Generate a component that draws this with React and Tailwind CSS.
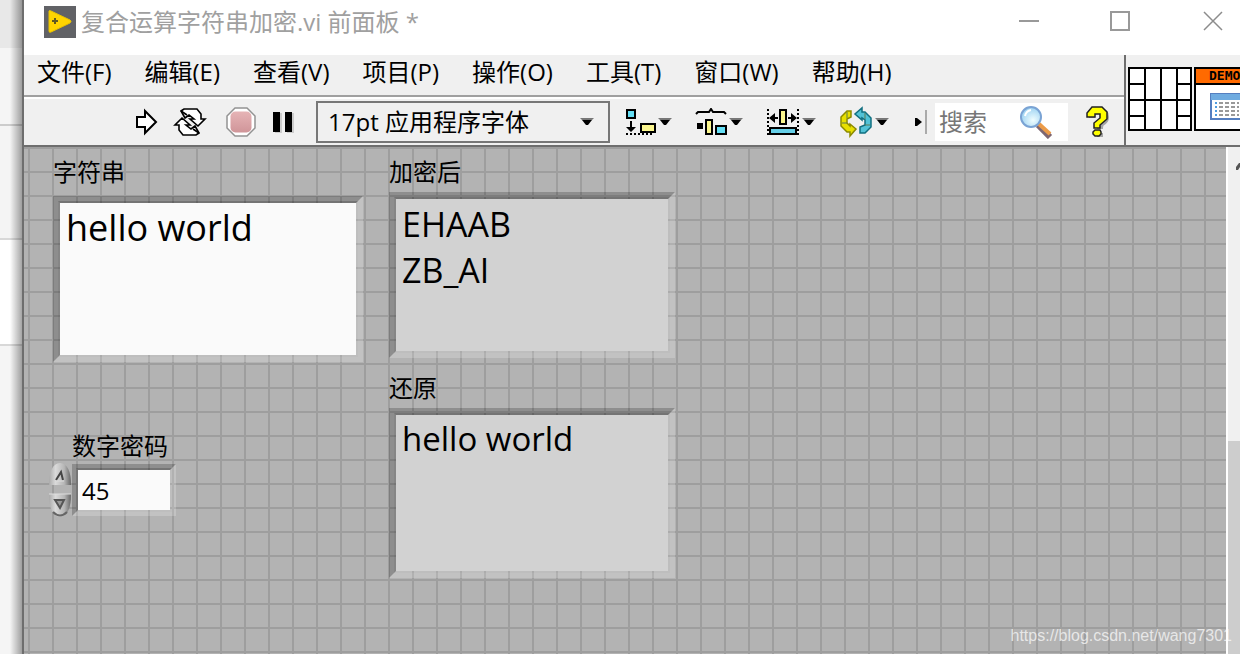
/**
 * App.jsx — LabVIEW front panel window for the string cipher VI
 */
const MENUS = ["文件(F)", "编辑(E)", "查看(V)", "项目(P)", "操作(O)", "工具(T)", "窗口(W)", "帮助(H)"];

const UI_FONT = "font-['Open_Sans','Noto_Sans_CJK_SC',sans-serif]";

// two-step bevel: soft outer ring on the wrapper, darker inner ring on the field
const BEVEL_OUTER = "border-t-black/20 border-l-black/20 border-r-white/20 border-b-white/20";
const BEVEL_INNER = "border-2 border-t-black/35 border-l-black/25 border-r-white/15 border-b-white/15 bg-clip-padding";

function Caret({ className = "" }) {
  return (
    <svg viewBox="0 0 14 8" className={`w-[14px] h-2 flex-shrink-0 ${className}`} aria-hidden="true">
      <path d="M0 0h14L12 2H2z" fill="#777" />
      <path d="M2 2h10L8 7H6z" fill="#000" />
    </svg>
  );
}

function VIIcon() {
  return (
    <svg viewBox="0 0 32 32" className="w-8 h-8 flex-shrink-0" aria-hidden="true">
      <rect width="32" height="32" fill="#616266" />
      <path d="M5 5Q5 4 7 5L26 14Q28 15 26 17L7 26Q5 27 5 25z" fill="#ffd400" stroke="#e8c200" strokeWidth="1" />
      <path d="M11 12v6M8 15h6" stroke="#615a20" strokeWidth="2" />
    </svg>
  );
}

function RunIcon() {
  return (
    <svg viewBox="0 0 24 28" className="w-6 h-7" aria-hidden="true">
      <path d="M2 9H10V3L21 14L10 25V19H2z" fill="#fff" stroke="#000" strokeWidth="2" />
    </svg>
  );
}

function RunLoopIcon() {
  return (
    <svg viewBox="0 0 34 28" className="w-[34px] h-7" aria-hidden="true">
      <path d="M8 3L11 1H24L28 6V11H32L25 18L17 11H21L16 7L12 10z" fill="#fff" stroke="#000" strokeWidth="1.6" />
      <path d="M26 25L23 27H10L6 22V17H2L9 10L17 17H13L18 21L22 18z" fill="#fff" stroke="#000" strokeWidth="1.6" />
      <path d="M8 3L14 7M26 25L20 21" stroke="#000" strokeWidth="1.6" />
    </svg>
  );
}

function AbortIcon() {
  return (
    <svg viewBox="0 0 32 32" className="w-8 h-8" aria-hidden="true">
      <defs>
        <linearGradient id="abort" x1="0" y1="0" x2="0" y2="1">
          <stop offset="0" stopColor="#e6b4b6" />
          <stop offset="1" stopColor="#d09599" />
        </linearGradient>
      </defs>
      <path d="M10 2H22L30 10V22L22 30H10L2 22V10z" fill="#fff" stroke="#929292" strokeWidth="1.5" />
      <rect x="5.5" y="5.5" width="21" height="21" rx="5" fill="url(#abort)" />
    </svg>
  );
}

function PauseIcon() {
  return (
    <svg viewBox="0 0 22 24" className="w-[22px] h-6" aria-hidden="true">
      <path d="M2 3h7v20H2zM14 3h7v20h-7z" fill="#ccc" />
      <path d="M0 2h7v20H0zM12 2h7v20h-7z" fill="#000" />
    </svg>
  );
}

function AlignIcon() {
  return (
    <svg viewBox="0 0 32 28" className="w-8 h-7" aria-hidden="true">
      <rect x="3" y="2" width="8" height="8" fill="#65dff5" stroke="#000" strokeWidth="2" />
      <path d="M6 13h2v6h4l-5 5l-5-5h4z" fill="#000" />
      <rect x="17" y="16" width="14" height="8" fill="#fbf68e" stroke="#000" strokeWidth="2" />
      <path d="M2 26H28" stroke="#000" strokeWidth="2" strokeDasharray="2 2" />
    </svg>
  );
}

function DistributeIcon() {
  return (
    <svg viewBox="0 0 32 28" className="w-8 h-7" aria-hidden="true">
      <path d="M1 6L3 4H14L16 1L18 4H29L31 6" fill="none" stroke="#000" strokeWidth="2" />
      <rect x="2" y="15" width="6" height="6" fill="#000" />
      <rect x="11" y="12" width="6" height="14" fill="#fbf68e" stroke="#000" strokeWidth="2" />
      <rect x="21" y="18" width="10" height="8" fill="#65dff5" stroke="#000" strokeWidth="2" />
    </svg>
  );
}

function ResizeIcon() {
  return (
    <svg viewBox="0 0 34 28" className="w-[34px] h-7" aria-hidden="true">
      <path d="M2 1V27M32 1V27" stroke="#000" strokeWidth="2" strokeDasharray="2 2" />
      <path d="M3 10L9 5v4h3v2H9v4zM31 10L25 5v4h-3v2h3v4z" fill="#000" />
      <rect x="14" y="2" width="6" height="14" fill="#fbf68e" stroke="#000" strokeWidth="2" />
      <rect x="4" y="20" width="26" height="6" fill="#65cfe8" stroke="#000" strokeWidth="2" />
    </svg>
  );
}

function ReorderIcon() {
  return (
    <svg viewBox="0 0 34 32" className="w-[34px] h-8" aria-hidden="true">
      <path d="M12 5H8L2 11V20L8 26H11V30L17 23L11 18V20L8 17V13L12 11z" fill="#e8e000" stroke="#8c8a00" strokeWidth="1.5" />
      <path d="M21 27H26L32 21V12L26 6H23V2L16 8L23 14V12L26 14V19L21 21z" fill="#52c2d6" stroke="#116f80" strokeWidth="1.5" />
      <path d="M8 6V12M3 17H8M26 7V13M26 19H31" stroke="#5c7b55" strokeWidth="1" />
    </svg>
  );
}

function SearchIcon() {
  return (
    <svg viewBox="0 0 34 34" className="w-[34px] h-[34px] flex-shrink-0" aria-hidden="true">
      <defs>
        <radialGradient id="lens" cx="0.6" cy="0.65" r="0.65">
          <stop offset="0" stopColor="#effdff" />
          <stop offset="1" stopColor="#9cd2f2" />
        </radialGradient>
      </defs>
      <path d="M19 20L31 32" stroke="#7d6671" strokeWidth="6" />
      <path d="M20 19L31 29" stroke="#eb9b48" strokeWidth="4" />
      <circle cx="12" cy="12" r="10" fill="url(#lens)" stroke="#7aa3d4" strokeWidth="2" />
      <path d="M6 11Q7 6 12 5" fill="none" stroke="#fff" strokeWidth="2" />
    </svg>
  );
}

function HelpIcon() {
  return (
    <svg viewBox="0 0 24 32" className="w-6 h-8" aria-hidden="true">
      <path d="M6 12V9Q7 5 13 5Q20 5 20 11Q20 15 16 17Q14 18 14 23M14 27V31" fill="none" stroke="#a5a5a5" strokeWidth="6" />
      <path d="M1 11V7L6 1H16L21 6V13L14 19V22H8V17L14 12V8H9V11z" fill="#ff0" stroke="#222" strokeWidth="1.5" />
      <path d="M9 24H14L15 26V28L13 30H9L7 28V26z" fill="#ff0" stroke="#222" strokeWidth="1.5" />
    </svg>
  );
}

function ConnectorPane() {
  return (
    <svg viewBox="0 0 64 64" className="w-16 h-16 flex-shrink-0" role="img" aria-label="连线板">
      <rect x="1" y="1" width="62" height="62" fill="#fff" />
      <path d="M1 1H63V63H1zM17 1V63M33 1V63M49 1V63M1 33H63M1 17H17M49 17H63M1 49H17M49 49H63" fill="none" stroke="#000" strokeWidth="2" />
    </svg>
  );
}

function DemoIcon() {
  return (
    <div className="w-16 h-16 flex-shrink-0 border-2 border-black bg-white">
      <div className="h-4 border-b-2 border-black bg-[#ff6a00] pl-[13px] font-['DejaVu_Sans_Mono',monospace] text-[13px] leading-[14px] font-bold text-black">
        DEMO
      </div>
      <svg viewBox="0 0 60 44" className="w-[60px] h-11" aria-hidden="true">
        <rect x="15" y="9" width="32" height="25" fill="#fff" stroke="#557fc0" strokeWidth="2" />
        <rect x="15" y="9" width="32" height="6" fill="#6fabe0" />
        <path d="M19 18H21M19 22H21M19 26H21M19 30H21" stroke="#4f9de0" strokeWidth="2" />
        <path d="M23 18H43M23 22H43M23 26H43M23 30H43" stroke="#999" strokeWidth="2" strokeDasharray="4 2" />
      </svg>
    </div>
  );
}

function ToolButton({ label, menu, children }) {
  return (
    <button type="button" aria-label={label} className="flex items-center gap-0.5 flex-shrink-0">
      {children}
      {menu && <Caret />}
    </button>
  );
}

function TitleBar() {
  return (
    <header className="flex h-[55px] items-start bg-white pl-5">
      <div className="flex items-center gap-[5px] pt-1.5">
        <VIIcon />
        <h1 className="text-2xl leading-8 font-normal whitespace-nowrap text-[#a0a0a0]">复合运算字符串加密.vi 前面板 *</h1>
      </div>
      <div className="ml-auto flex items-center gap-[70px] pt-[9px] pr-4">
        <button type="button" aria-label="最小化">
          <svg viewBox="0 0 22 24" className="w-[22px] h-6"><path d="M1 12H21" stroke="#999" strokeWidth="2" /></svg>
        </button>
        <button type="button" aria-label="最大化">
          <svg viewBox="0 0 22 24" className="w-[22px] h-6"><rect x="1" y="3" width="18" height="18" fill="none" stroke="#999" strokeWidth="2" /></svg>
        </button>
        <button type="button" aria-label="关闭">
          <svg viewBox="0 0 22 24" className="w-[22px] h-6"><path d="M2 3L20 21M20 3L2 21" stroke="#8c8c8c" strokeWidth="1.5" /></svg>
        </button>
      </div>
    </header>
  );
}

function Toolbar() {
  return (
    <div className="flex h-12 items-center border-t-2 border-white pl-[111px]">
      <div className="flex items-center">
        <ToolButton label="运行"><RunIcon /></ToolButton>
        <div className="ml-[14px]"><ToolButton label="连续运行"><RunLoopIcon /></ToolButton></div>
        <div className="ml-[18px]"><ToolButton label="中止执行"><AbortIcon /></ToolButton></div>
        <div className="ml-4"><ToolButton label="暂停"><PauseIcon /></ToolButton></div>
      </div>
      <div className="relative ml-[21px] flex-shrink-0">
        <select
          aria-label="文本设置"
          className="h-[42px] w-[294px] appearance-none border-2 border-[#777] bg-[#f0f0f0] pl-2.5 text-2xl leading-8 text-black"
        >
          <option>17pt 应用程序字体</option>
        </select>
        <Caret className="pointer-events-none absolute top-[17px] right-4" />
      </div>
      <div className="ml-[14px] flex items-center gap-[23px]">
        <ToolButton label="对齐对象" menu><AlignIcon /></ToolButton>
        <ToolButton label="分布对象" menu><DistributeIcon /></ToolButton>
        <ToolButton label="调整对象大小" menu><ResizeIcon /></ToolButton>
        <ToolButton label="重新排序" menu><ReorderIcon /></ToolButton>
      </div>
      <svg viewBox="0 0 14 24" className="ml-6 w-[14px] h-6 flex-shrink-0" aria-hidden="true">
        <path d="M2 8H4L9 12L4 16H2z" fill="#000" />
        <path d="M13 0V24" stroke="#aaa" strokeWidth="2" />
      </svg>
      <label className="ml-2 flex h-[38px] w-[133px] flex-shrink-0 items-center bg-white pl-1">
        <input type="search" aria-label="搜索" placeholder="搜索" className="w-20 text-2xl leading-8 outline-none placeholder:text-[#777]" />
        <SearchIcon />
      </label>
      <div className="ml-[18px]"><ToolButton label="帮助"><HelpIcon /></ToolButton></div>
    </div>
  );
}

function StringBox({ id, label, value, readOnly, labelClass, boxClass }) {
  return (
    <div className="flex flex-col items-start">
      <label htmlFor={id} className={`text-2xl leading-8 text-black ${labelClass}`}>{label}</label>
      <div className={`border-[5px] ${BEVEL_OUTER}`}>
        <textarea
          id={id}
          defaultValue={value}
          readOnly={readOnly}
          spellCheck={false}
          className={`block resize-none overflow-hidden px-1.5 text-black outline-none ${BEVEL_INNER} ${boxClass}`}
        />
      </div>
    </div>
  );
}

function Spinner() {
  return (
    <div className="flex w-6 flex-col gap-1">
      <button type="button" aria-label="增大">
        <svg viewBox="0 0 24 26" className="w-6 h-[26px]">
          <defs>
            <linearGradient id="knob" x1="0" y1="0" x2="1" y2="0">
              <stop offset="0" stopColor="#aaa" />
              <stop offset="0.3" stopColor="#dadada" />
              <stop offset="0.7" stopColor="#b5b5b5" />
              <stop offset="1" stopColor="#666" />
            </linearGradient>
          </defs>
          <path d="M1 23Q1 2 12 1Q23 2 23 23z" fill="url(#knob)" />
          <path d="M8 18L13 10L15 18" fill="none" stroke="#444" strokeWidth="2" />
          <path d="M8 19H16" stroke="#ddd" strokeWidth="1" />
        </svg>
      </button>
      <button type="button" aria-label="减小">
        <svg viewBox="0 0 24 26" className="w-6 h-[26px]">
          <path d="M1 2Q1 24 12 25Q23 24 23 2z" fill="url(#knob)" />
          <path d="M1 2H23" stroke="#ddd" strokeWidth="1" />
          <path d="M5 20Q12 27 19 20" fill="none" stroke="#666" strokeWidth="2" />
          <path d="M7 8H16L12 16z" fill="#999" stroke="#555" strokeWidth="2" />
        </svg>
      </button>
    </div>
  );
}

function FrontPanel() {
  return (
    <main className="flex min-w-0 flex-1 items-start gap-[26px] bg-[#b3b3b3] bg-[linear-gradient(to_right,#9e9e9e_2px,transparent_2px),linear-gradient(to_bottom,#9e9e9e_2px,transparent_2px)] bg-[size:24px_24px] bg-[position:4px_0px] pl-[29px]">
      <div className="flex flex-col items-start pt-[9px]">
        <StringBox
          id="plain"
          label="字符串"
          value="hello world"
          labelClass="mb-2"
          boxClass="h-[156px] w-[300px] bg-[#fafafa] text-4xl leading-[50px]"
        />
        <div className="mt-[68px] flex flex-col">
          <label htmlFor="key" className="ml-[19px] text-2xl leading-8 text-black">数字密码</label>
          <div className="-ml-[5px] flex items-center">
            <Spinner />
            <div className={`border-4 ${BEVEL_OUTER}`}>
              <input
                id="key"
                type="text"
                inputMode="numeric"
                defaultValue="45"
                className={`block h-11 w-24 bg-[#fafafa] px-1 text-2xl text-black outline-none ${BEVEL_INNER}`}
              />
            </div>
          </div>
        </div>
      </div>
      <div className="flex flex-col items-start gap-[14px] pt-[9px]">
        <StringBox
          id="cipher"
          label="加密后"
          value={"EHAAB\nZB_AI"}
          readOnly
          labelClass="mb-1"
          boxClass="h-[156px] w-[276px] bg-[#d2d2d2] pt-0.5 text-[34px] leading-[46px]"
        />
        <StringBox
          id="restored"
          label="还原"
          value="hello world"
          readOnly
          labelClass="mb-1"
          boxClass="h-[160px] w-[276px] bg-[#d2d2d2] text-[33px] leading-[48px]"
        />
      </div>
    </main>
  );
}

export default function App() {
  return (
    <div className={`relative flex min-h-screen overflow-hidden bg-white ${UI_FONT}`}>
      <aside className="relative flex w-[22px] flex-shrink-0 flex-col">
        <div className="h-12 bg-[#e8e8e8]" />
        <div className="h-[78px] border-b-2 border-[#ccc] bg-[#f5f5f5]" />
        <div className="h-[114px] border-b-2 border-[#d8d8d8] bg-[#f4f4f4]" />
        <div className="h-[106px] border-b-2 border-[#d8d8d8] bg-white" />
        <div className="flex-1 bg-[#f5f5f5]" />
        <div className="absolute inset-y-0 right-0 w-3 bg-gradient-to-r from-transparent to-black/35" />
      </aside>
      <div className="flex min-w-0 flex-1 flex-col border-l-2 border-[#6e6e6e]">
        <TitleBar />
        <div className="flex border-b-2 border-[#6e6e6e] bg-[#f0f0f0]">
          <div className="min-w-0 flex-1">
            <nav className="flex h-[42px] items-start gap-[33px] border-b-2 border-[#a0a0a0] pt-px pl-[13px]">
              {MENUS.map((name) => (
                <button type="button" key={name} className="flex-shrink-0 text-2xl leading-8 text-black">{name}</button>
              ))}
            </nav>
            <Toolbar />
          </div>
          <div className="flex w-[116px] flex-shrink-0 gap-0.5 overflow-hidden border-l-2 border-[#6e6e6e] pt-3 pl-0.5">
            <ConnectorPane />
            <DemoIcon />
          </div>
        </div>
        <div className="flex flex-1">
          <FrontPanel />
          <div className="flex w-[14px] flex-shrink-0 flex-col overflow-hidden border-l-2 border-white bg-[#f0f0f0]">
            <svg viewBox="0 0 12 32" className="w-3 h-8" aria-hidden="true">
              <path d="M8 23V20L11 16H12V20L10 23z" fill="#555" />
            </svg>
            <div className="mt-[262px] flex-1 bg-[#cdcdcd]" />
          </div>
        </div>
      </div>
      <p className="absolute right-2 bottom-1.5 font-['Liberation_Sans',sans-serif] text-base leading-6 text-white/70">
        https://blog.csdn.net/wang7301
      </p>
    </div>
  );
}
